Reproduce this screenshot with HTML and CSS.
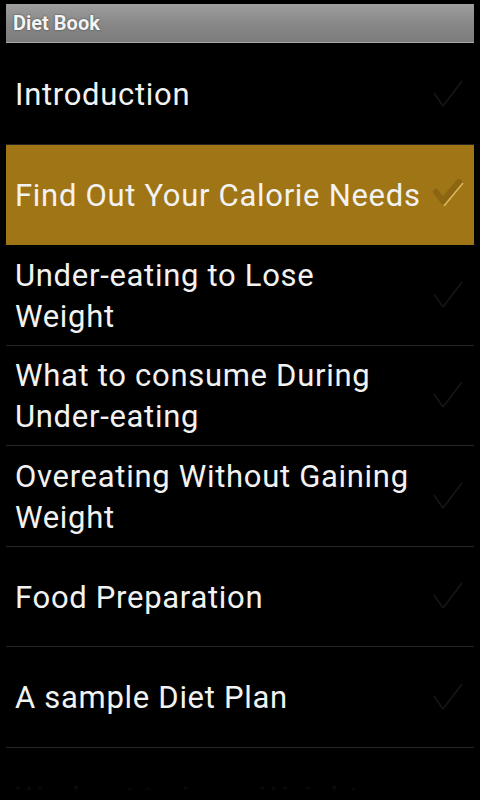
FILE: index.html
```html
<!DOCTYPE html>
<html lang="en">
<head>
    <meta charset="UTF-8">
    <meta name="viewport" content="width=device-width, initial-scale=1.0">
    <title>Diet Book</title>
    <link rel="stylesheet" href="styles.css">
</head>
<body>
    <div id="app">
        <div class="title-bar">Diet Book</div>

        <!-- Chapter list -->
        <ul class="chapter-list">
            <li class="chapter">
                <span class="chapter-title">Introduction</span>
                <svg class="check" viewBox="0 0 32 32"><path d="M2 14 L11 27 M11 27 L30 2"/></svg>
            </li>
            <li class="chapter selected">
                <span class="chapter-title">Find Out Your Calorie Needs</span>
                <svg class="check" viewBox="0 0 32 32"><path class="check-shade" d="M4 13 L11 22 L27 3"/><path class="check-light" d="M12 27 L31 4"/></svg>
            </li>
            <li class="chapter">
                <span class="chapter-title">Under-eating to Lose<br>Weight</span>
                <svg class="check" viewBox="0 0 32 32"><path d="M2 14 L11 27 M11 27 L30 2"/></svg>
            </li>
            <li class="chapter">
                <span class="chapter-title">What to consume During<br>Under-eating</span>
                <svg class="check" viewBox="0 0 32 32"><path d="M2 14 L11 27 M11 27 L30 2"/></svg>
            </li>
            <li class="chapter">
                <span class="chapter-title">Overeating Without Gaining<br>Weight</span>
                <svg class="check" viewBox="0 0 32 32"><path d="M2 14 L11 27 M11 27 L30 2"/></svg>
            </li>
            <li class="chapter">
                <span class="chapter-title">Food Preparation</span>
                <svg class="check" viewBox="0 0 32 32"><path d="M2 14 L11 27 M11 27 L30 2"/></svg>
            </li>
            <li class="chapter">
                <span class="chapter-title">A sample Diet Plan</span>
                <svg class="check" viewBox="0 0 32 32"><path d="M2 14 L11 27 M11 27 L30 2"/></svg>
            </li>
            <li class="chapter">
                <span class="chapter-title">Workout to Lose Weight</span>
                <svg class="check" viewBox="0 0 32 32"><path d="M2 14 L11 27 M11 27 L30 2"/></svg>
            </li>
        </ul>
        <div class="fade"></div>
    </div>
</body>
</html>
```

FILE: styles.css
```css
html, body {
    margin: 0;
    padding: 0;
    background: #000;
}
body {
    font-family: Roboto, "Liberation Sans", sans-serif;
    color: #f2f2f2;
}
#app {
    position: relative;
    height: 800px;
    overflow: hidden;
}
.title-bar {
    margin: 4px 6px 0;
    height: 38px;
    padding-left: 7px;
    display: flex;
    align-items: center;
    font-size: 20px;
    font-weight: bold;
    color: #f4f4f4;
    text-shadow: 0 0 2px rgba(0,0,0,0.6);
    background: linear-gradient(#9e9e9e, #888 50%, #7c7c7c);
    border-bottom: 1px solid #a8a8a8;
}
.chapter-list {
    list-style: none;
    margin: 0 6px;
    padding: 1px 0 0;
}
.chapter {
    height: 99.5px;
    border-bottom: 1px solid #262626;
    display: flex;
    align-items: center;
    justify-content: space-between;
    padding: 0 10px 0 9px;
    box-sizing: content-box;
}
.chapter-title {
    font-size: 31px;
    line-height: 41px;
    letter-spacing: 0.7px;
    white-space: nowrap;
    padding-top: 2px;
}
.chapter .check {
    width: 32px;
    height: 32px;
    flex-shrink: 0;
    margin-top: 2px;
}
.check path {
    fill: none;
    stroke: #7a7a7a;
    stroke-width: 1.6;
}
.check path:first-child {
    stroke: #161616;
}
.chapter.selected {
    background: #a07515;
    border-bottom-color: #a07515;
}
.selected .check path.check-shade {
    stroke: #8c6512;
    stroke-width: 6;
    stroke-linecap: round;
    stroke-linejoin: round;
}
.selected .check path.check-light {
    stroke: #e0b860;
    stroke-width: 1.4;
}
.fade {
    position: absolute;
    left: 0;
    right: 0;
    bottom: 0;
    height: 44px;
    background: linear-gradient(rgba(0,0,0,0), rgba(0,0,0,0.85) 55%, #000 80%);
}
```
